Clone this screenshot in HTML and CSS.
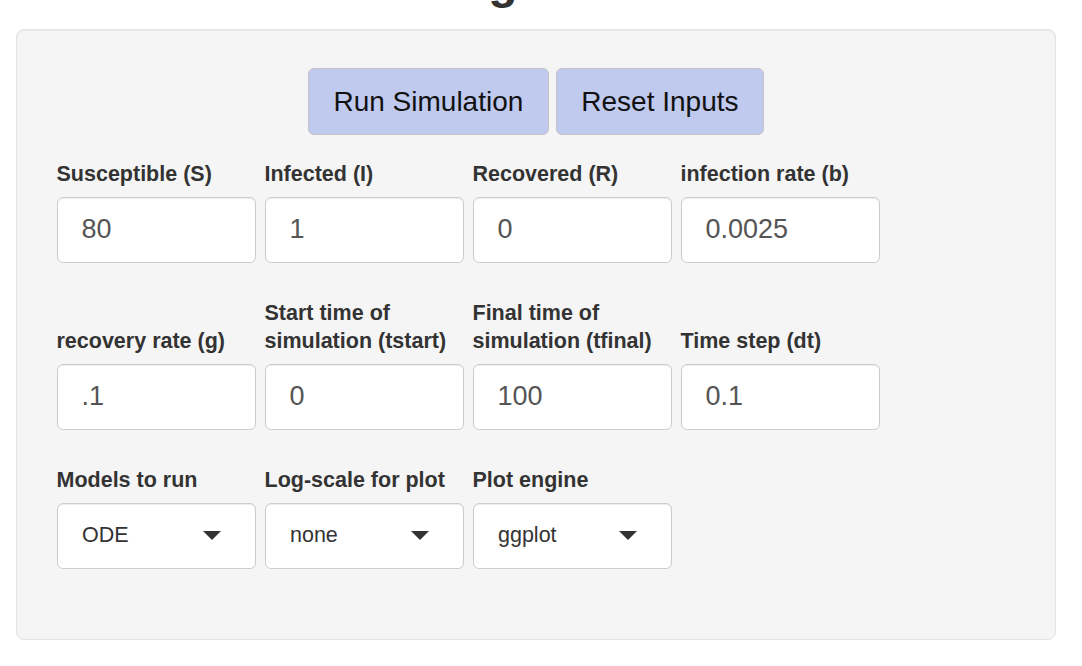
FILE: index.html
```html
<!DOCTYPE html>
<html lang="en">
<head>
<meta charset="utf-8">
<title>Simulation Settings</title>
<link rel="stylesheet" href="styles.css">
</head>
<body>
<h2 class="title">Settings</h2>
<div class="well">
  <div class="actions">
    <button class="btn" type="button">Run Simulation</button>
    <button class="btn" type="button">Reset Inputs</button>
  </div>
  <div class="grid">
    <div class="field">
      <label class="lbl">Susceptible (S)</label>
      <input class="ctl" type="text" value="80">
    </div>
    <div class="field">
      <label class="lbl">Infected (I)</label>
      <input class="ctl" type="text" value="1">
    </div>
    <div class="field">
      <label class="lbl">Recovered (R)</label>
      <input class="ctl" type="text" value="0">
    </div>
    <div class="field">
      <label class="lbl">infection rate (b)</label>
      <input class="ctl" type="text" value="0.0025">
    </div>

    <div class="field">
      <label class="lbl">recovery rate (g)</label>
      <input class="ctl" type="text" value=".1">
    </div>
    <div class="field">
      <label class="lbl">Start time of simulation (tstart)</label>
      <input class="ctl" type="text" value="0">
    </div>
    <div class="field">
      <label class="lbl">Final time of simulation (tfinal)</label>
      <input class="ctl" type="text" value="100">
    </div>
    <div class="field">
      <label class="lbl">Time step (dt)</label>
      <input class="ctl" type="text" value="0.1">
    </div>

    <div class="field">
      <label class="lbl">Models to run</label>
      <div class="sel"><span class="sel-text">ODE</span><span class="caret"></span></div>
    </div>
    <div class="field">
      <label class="lbl">Log-scale for plot</label>
      <div class="sel"><span class="sel-text">none</span><span class="caret"></span></div>
    </div>
    <div class="field">
      <label class="lbl">Plot engine</label>
      <div class="sel"><span class="sel-text">ggplot</span><span class="caret"></span></div>
    </div>
  </div>
</div>
</body>
</html>
```

FILE: styles.css
```css
html, body {
  margin: 0;
  padding: 0;
  background: #ffffff;
  font-family: "Liberation Sans", Arial, Helvetica, sans-serif;
  color: #333333;
}

.title {
  margin: -44px 0 20px 0;
  padding-left: 355px;
  font-size: 48px;
  line-height: 52.8px;
  font-weight: bold;
  color: #333333;
  white-space: nowrap;
}

.well {
  margin: 0 26px 0 16px;
  background: #f5f5f5;
  border: 1.5px solid #e3e3e3;
  border-radius: 8px;
  box-shadow: inset 0 1px 1px rgba(0, 0, 0, 0.05);
  padding: 38.5px 0 70.5px 39.5px;
}

.actions {
  display: flex;
  justify-content: center;
  gap: 7px;
  margin-left: -39.5px;
  margin-bottom: 24.5px;
}

.btn {
  height: 67px;
  padding: 0 24.5px;
  font-family: "Liberation Sans", Arial, Helvetica, sans-serif;
  font-size: 28px;
  color: #111111;
  background: #c0c9ee;
  border: 1.5px solid #c4c4c4;
  border-radius: 6px;
}

.grid {
  display: grid;
  grid-template-columns: repeat(4, 199px);
  column-gap: 9px;
  row-gap: 36px;
  align-items: end;
}

.field {
  display: flex;
  flex-direction: column;
}

.lbl {
  font-size: 21.5px;
  line-height: 28px;
  font-weight: bold;
  color: #333333;
  margin-bottom: 9px;
}

.ctl {
  box-sizing: border-box;
  width: 199px;
  height: 66px;
  margin: 0;
  padding: 0 24px;
  font-family: "Liberation Sans", Arial, Helvetica, sans-serif;
  font-size: 27px;
  color: #555555;
  background: #ffffff;
  border: 1.5px solid #cccccc;
  border-radius: 6px;
  box-shadow: inset 0 1px 1px rgba(0, 0, 0, 0.075);
  outline: none;
}

.sel {
  box-sizing: border-box;
  width: 199px;
  height: 66px;
  display: flex;
  align-items: center;
  justify-content: space-between;
  padding: 0 34px 0 24.5px;
  background: #ffffff;
  border: 1.5px solid #cccccc;
  border-radius: 6px;
  box-shadow: inset 0 1px 1px rgba(0, 0, 0, 0.075);
}

.sel-text {
  font-size: 21.5px;
  color: #333333;
}

.caret {
  width: 0;
  height: 0;
  border-left: 9.5px solid transparent;
  border-right: 9.5px solid transparent;
  border-top: 9px solid #333333;
}
```
